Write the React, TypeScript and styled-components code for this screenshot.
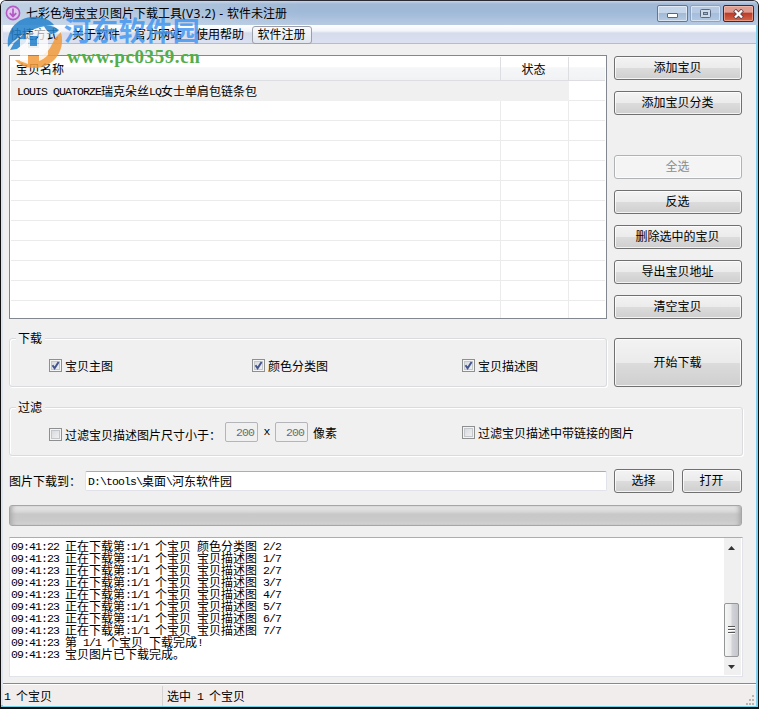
import React from "react";
import styled, { createGlobalStyle, css } from "styled-components";

const Global = createGlobalStyle`
  *, *::before, *::after { box-sizing: border-box; }
  html, body { margin: 0; padding: 0; overflow: hidden; }
  body { font-family: "Noto Sans CJK SC", sans-serif; font-size: 12px; line-height: 12px; color: #000; }
`;

const Window = styled.div`
  position: relative;
  width: 759px;
  height: 709px;
  display: flex;
  flex-direction: column;
  border: 1px solid #111;
  border-top-color: #2b2b36;
  border-bottom-width: 2px;
  border-radius: 6px 6px 0 0;
  box-shadow: inset -2px 0 #7fd0ee, inset 0 -2px #72d3e8, inset 2px 0 #dfe3ec;
  background: #f0f0f0;
  overflow: hidden;
`;

const TitleBar = styled.header`
  height: 24px;
  flex: none;
  display: flex;
  align-items: center;
  padding: 0 4px 0 4px;
  background: linear-gradient(to right, rgba(220, 230, 240, 0.55), transparent 40%),
    linear-gradient(#c6d6e8 0, #a2b9d5 3px, #9fb9d8 11px, #b7cae2 100%);
`;
const TitleText = styled.h1`
  margin: 0 auto 0 5px;
  font-size: 12px;
  font-weight: 400;
  line-height: 16px;
  white-space: pre;
  span { font-family: "Noto Sans", sans-serif; letter-spacing: 0.4px; }
`;
const Controls = styled.div`
  display: flex;
  gap: 2px;
  margin-top: 1px;
`;
const Control = styled.button<{ $kind?: "dim" | "close" }>`
  width: 31px;
  height: 17px;
  padding: 0;
  display: grid;
  place-items: center;
  border: 1px solid #5f7895;
  border-radius: 2px;
  box-shadow: inset 0 0 0 1px rgba(255, 255, 255, 0.5);
  background: linear-gradient(#c5d6ea 45%, #a3bad4 50%, #b5cbe3);
  ${(p) => p.$kind === "dim" && css`border-color: #8ca4c3; background: linear-gradient(#b6cae3 45%, #a6bddb 50%, #b1c8e3);`}
  ${(p) => p.$kind === "close" && css`border-color: #4f2027; box-shadow: inset 0 0 0 1px rgba(255, 205, 190, 0.5); background: linear-gradient(#df9c91 40%, #bd3c29 50%, #d3674b);`}
`;

const MenuBar = styled.nav`
  height: 19px;
  flex: none;
  display: flex;
  align-items: center;
  margin: 0 2px;
  padding-left: 7px;
  border-bottom: 1px solid #b9bcc3;
  background: linear-gradient(#fff 0, #f2f4fa 6px, #d5dcec 8px, #dbe1f0 100%);
`;
const MenuItem = styled.span`
  width: 62px;
  line-height: 16px;
`;
const MenuButton = styled.button`
  width: 60px;
  height: 18px;
  margin: 1px 0 0 -6px;
  padding: 0 1px 1px 0;
  font: inherit;
  border: 1px solid #9a9fa9;
  border-radius: 3px;
  background: linear-gradient(#fafafc, #e0e5ee);
`;

const Content = styled.main`
  flex: 1;
  padding: 11px 15px 0 8px;
  display: flex;
  flex-direction: column;
`;
const Columns = styled.div`
  display: grid;
  grid-template-columns: 598px 128px;
  column-gap: 7px;
`;
const TopArea = styled(Columns)` height: 264px; `;

const List = styled.section`
  height: 264px;
  padding: 1px;
  border: 1px solid #828790;
  background: #fff;
`;
const ListRow = styled.div<{ $kind?: "head" | "selected" }>`
  display: grid;
  grid-template-columns: 490px 68px 1fr;
  grid-template-rows: 100%;
  height: 20px;
  & > div { border-right: 1px solid #ebebeb; border-bottom: 1px solid #ebebeb; padding-left: 7px; line-height: 17px; white-space: nowrap; }
  & > div:last-child { border-right: 0; }
  ${(p) => p.$kind === "head" && css`
    height: 24px;
    background: linear-gradient(#fff 40%, #f5f6f7 45%, #f1f2f4);
    & > div { line-height: 23px; padding-left: 5px; border-color: #dcdee1; }
    & > div:nth-child(2) { padding: 0 2px 0 0; text-align: center; }
  `}
  ${(p) => p.$kind === "selected" && css`
    & > div { line-height: 19px; padding-left: 6px; border-color: #f0f0f0; background: #f0f0f0; }
    & > div:last-child { background: #fff; border-color: #ebebeb; }
  `}
  ${(p) => !p.$kind && css`
    &:last-child { height: 17px; }
    &:last-child > div { border-bottom: 0; }
  `}
`;

const Actions = styled.div`
  display: flex;
  flex-direction: column;
  gap: 11px;
  padding-top: 1px;
`;
const Button = styled.button<{ $tall?: boolean; $apart?: boolean }>`
  width: 100%;
  height: ${(p) => (p.$tall ? 49 : 24)}px;
  margin: ${(p) => (p.$apart ? "29px 0 0" : "0")};
  padding: 0 1px 2px 0;
  font: inherit;
  line-height: 18px;
  color: #000;
  border: 1px solid #707070;
  border-radius: 3px;
  box-shadow: inset 0 0 0 1px rgba(255, 255, 255, 0.75);
  background: linear-gradient(#f3f3f3, #ebebeb 50%, #dcdcdc 50%, #cfcfcf);
  &:disabled { color: #8b8b8b; border-color: #b0b3b6; background: #f4f4f4; }
`;

const DownloadArea = styled(Columns)` margin-top: 19px; `;
const Group = styled.fieldset`
  position: relative;
  width: 100%;
  height: 49px;
  margin: 0;
  padding: 0 0 0 39px;
  display: grid;
  grid-template-columns: 203px 210px 1fr;
  align-items: center;
  border: 1px solid #d9dbde;
  border-radius: 3px;
  box-shadow: inset 1px 1px #fff, 1px 1px #fff;
`;
const FilterGroup = styled(Group)`
  width: 734px;
  margin-top: 20px;
  grid-template-columns: 413px 1fr;
`;
const GroupTitle = styled.span`
  position: absolute;
  left: 6px;
  top: -9px;
  padding: 0 3px 0 2px;
  line-height: 16px;
  background: #f0f0f0;
`;
const Option = styled.label<{ $up?: boolean }>`
  display: flex;
  align-items: center;
  gap: 3px;
  height: 18px;
  line-height: 18px;
  margin-top: ${(p) => (p.$up ? 2 : 6)}px;
  white-space: nowrap;
`;
const Box = styled.i`
  width: 13px;
  height: 13px;
  flex: none;
  display: grid;
  border: 1px solid #8e8f8f;
  box-shadow: inset 0 0 0 1px #f4f4f4, inset 0 0 0 2px #c3c6ca;
  background: linear-gradient(135deg, #d2d5da, #f6f6f6);
`;
const Colon = styled.span` display: inline-block; width: 12px; `;
const FilterSize = styled.div`
  display: flex;
  align-items: center;
  ${Option} { width: 176px; }
`;
const SizeField = styled.span`
  width: 33px;
  height: 20px;
  margin-top: 1px;
  padding-right: 3px;
  text-align: right;
  line-height: 18px;
  color: #6d6d6d;
  border: 1px solid #b3b5b8;
  border-radius: 2px;
`;
const Times = styled.span` width: 17px; text-align: center; `;
const Unit = styled.span` padding: 2px 0 0 5px; line-height: 16px; `;

const PathRow = styled.div`
  display: grid;
  grid-template-columns: 76px 522px 67px 68px;
  align-items: center;
  height: 24px;
  margin-top: 13px;
  & > button { width: 60px; justify-self: end; }
  & > span { line-height: 18px; white-space: nowrap; }
`;
const PathField = styled.div`
  height: 20px;
  padding-left: 2px;
  line-height: 17px;
  border: 1px solid #e2e3ea;
  border-top-color: #abadb3;
  border-radius: 2px;
  background: #fff;
`;
const Progress = styled.div`
  width: 733px;
  height: 21px;
  flex: none;
  margin-top: 12px;
  border: 1px solid #a6a6a6;
  border-radius: 3px;
  box-shadow: inset 4px 0 4px -2px #aaa, inset -4px 0 4px -2px #aaa;
  background: linear-gradient(#ececec, #d6d6d6 6px, #c8c8c8 8px, #cacaca 15px, #d9d9d9);
`;
const Log = styled.section`
  width: 734px;
  height: 140px;
  flex: none;
  display: flex;
  margin-top: 11px;
  padding: 0 1px 1px 0;
  border: 1px solid #e2e3ea;
  border-top-color: #abadb3;
  background: #fff;
`;
const LogLines = styled.div`
  flex: 1;
  padding: 2px 0 0 1px;
  & > div { height: 12px; line-height: 12px; white-space: pre; }
`;
const ScrollBar = styled.div`
  width: 17px;
  display: flex;
  flex-direction: column;
  align-items: center;
  padding: 8px 2px 6px 0;
  background: #f0f0f0;
`;
const Thumb = styled.div`
  width: 15px;
  height: 54px;
  margin: auto 0 8px;
  display: grid;
  place-items: center;
  border: 1px solid #949698;
  border-radius: 2px;
  background: linear-gradient(to right, #f6f6f6, #e9eaeb 45%, #d2d3d8 55%, #c5c6cb);
`;
const StatusBar = styled.footer`
  height: 23px;
  flex: none;
  display: flex;
  margin: 0 2px 1px;
  padding-left: 1px;
  line-height: 23px;
  border-top: 1px solid #898989;
  box-shadow: inset 0 1px #fff;
  background: #f1edec;
  & > div:first-child { width: 159px; margin-top: 2px; line-height: 19px; border-right: 1px solid #d5d2d2; }
  & > div:nth-child(2) { flex: 1; padding-left: 4px; }
  & > svg { align-self: flex-end; }
`;

const Watermark = styled.div`
  position: absolute;
  left: 5px;
  top: 13px;
  width: 200px;
  height: 56px;
  pointer-events: none;
  & > svg { position: absolute; left: 0; top: 0; }
`;
const SiteName = styled.div`
  position: absolute;
  left: 58px;
  top: 0;
  font-size: 27px;
  line-height: 32px;
  font-weight: 700;
  letter-spacing: 0.2px;
  white-space: nowrap;
  color: #3f95f0;
  opacity: 0.82;
`;
const SiteUrl = styled.div`
  position: absolute;
  left: 61px;
  top: 31px;
  font: 700 19px/24px "Liberation Serif", serif;
  letter-spacing: 0.6px;
  white-space: nowrap;
  color: #54ad4d;
`;

const Narrow = styled.span`
  font-family: "Liberation Mono", monospace;
  font-size: 11.5px;
  letter-spacing: -0.9px;
  line-height: 1;
  vertical-align: 1px;
  white-space: pre;
`;

/** Sets half-width characters on a six-pixel grid beside twelve-pixel ideographs. */
function Mixed({ text }: { text: string }) {
  return <>{text.split(/([\x20-\x7e]+)/).map((part, i) => (i % 2 ? <Narrow key={i}>{part}</Narrow> : part))}</>;
}

function Check({ label, checked, up, colon }: { label: string; checked?: boolean; up?: boolean; colon?: boolean }) {
  return (
    <Option $up={up}>
      <Box>
        {checked && (
          <svg width="11" height="11" viewBox="0 0 11 11" fill="none">
            <path d="M2.5 5.2 4.6 8.3 8.6 2" stroke="#43558f" strokeWidth="2" />
          </svg>
        )}
      </Box>
      <span>{label}{colon && <Colon>：</Colon>}</span>
    </Option>
  );
}

const logLines = [
  "09:41:22 正在下载第:1/1 个宝贝 颜色分类图 2/2",
  ...[1, 2, 3, 4, 5, 6, 7].map((n) => `09:41:23 正在下载第:1/1 个宝贝 宝贝描述图 ${n}/7`),
  "09:41:23 第 1/1 个宝贝 下载完成!",
  "09:41:23 宝贝图片已下载完成。",
];

export default function App() {
  return (
    <Window>
      <Global />
      <TitleBar>
        <svg width="16" height="16" viewBox="0 0 16 16" fill="none" stroke="#b45bc4">
          <circle cx="8" cy="8" r="6.6" strokeWidth="1.6" fill="#dfc9ee" />
          <path d="M8 3.5v8M4.8 8.2 8 11.4l3.2-3.2" strokeWidth="1.8" />
        </svg>
        <TitleText>七彩色淘宝宝贝图片下载工具<span>(V3.2) - </span>软件未注册</TitleText>
        <Controls>
          <Control aria-label="最小化">
            <svg width="13" height="11" viewBox="0 0 13 11"><rect x="1.5" y="5.5" width="10" height="4" rx=".5" fill="#fff" stroke="#58677a" /></svg>
          </Control>
          <Control $kind="dim" aria-label="最大化">
            <svg width="11" height="9" viewBox="0 0 11 9" fill="none" stroke="#596b82"><rect x=".5" y=".5" width="10" height="8" rx="1" fill="#cfdae8" /><rect x="3.5" y="3.5" width="4" height="2" fill="#9db4d2" /></svg>
          </Control>
          <Control $kind="close" aria-label="关闭">
            <svg width="13" height="10" viewBox="0 0 13 10" fill="none"><path d="m2.5 1 8 8m0-8-8 8" stroke="#65454b" strokeWidth="4" /><path d="m3 1.5 7 7m0-7-7 7" stroke="#fff" strokeWidth="2.3" /></svg>
          </Control>
        </Controls>
      </TitleBar>
      <MenuBar>
        {["快捷方式", "关于软件", "官方网站", "使用帮助"].map((t) => <MenuItem key={t}>{t}</MenuItem>)}
        <MenuButton>软件注册</MenuButton>
      </MenuBar>
      <Content>
        <TopArea>
          <List>
            <ListRow $kind="head"><div>宝贝名称</div><div>状态</div><div /></ListRow>
            <ListRow $kind="selected"><div><Mixed text="LOUIS QUATORZE瑞克朵丝LQ女士单肩包链条包" /></div><div /><div /></ListRow>
            {Array.from({ length: 11 }, (_, i) => <ListRow key={i}><div /><div /><div /></ListRow>)}
          </List>
          <Actions>
            <Button>添加宝贝</Button>
            <Button>添加宝贝分类</Button>
            <Button $apart disabled>全选</Button>
            <Button>反选</Button>
            <Button>删除选中的宝贝</Button>
            <Button>导出宝贝地址</Button>
            <Button>清空宝贝</Button>
          </Actions>
        </TopArea>
        <DownloadArea>
          <Group as="section">
            <GroupTitle>下载</GroupTitle>
            <Check label="宝贝主图" checked />
            <Check label="颜色分类图" checked />
            <Check label="宝贝描述图" checked />
          </Group>
          <Button $tall>开始下载</Button>
        </DownloadArea>
        <FilterGroup as="section">
          <GroupTitle>过滤</GroupTitle>
          <FilterSize>
            <Check label="过滤宝贝描述图片尺寸小于" colon />
            <SizeField><Mixed text="200" /></SizeField>
            <Times><Mixed text="x" /></Times>
            <SizeField><Mixed text="200" /></SizeField>
            <Unit>像素</Unit>
          </FilterSize>
          <Check label="过滤宝贝描述中带链接的图片" up />
        </FilterGroup>
        <PathRow>
          <span>图片下载到<Colon>：</Colon></span>
          <PathField><Mixed text="D:\tools\桌面\河东软件园" /></PathField>
          <Button>选择</Button>
          <Button>打开</Button>
        </PathRow>
        <Progress />
        <Log>
          <LogLines>{logLines.map((line) => <div key={line}><Mixed text={line} /></div>)}</LogLines>
          <ScrollBar>
            <svg width="7" height="4" viewBox="0 0 7 4"><path d="M0 4 3.5 0 7 4Z" fill="#333" /></svg>
            <Thumb>
              <svg width="7" height="9" viewBox="0 0 7 9" stroke="#555"><path d="M0 .5h7M0 3.5h7M0 6.5h7" /><path d="M0 1.5h7M0 4.5h7M0 7.5h7" stroke="#fff" /></svg>
            </Thumb>
            <svg width="7" height="4" viewBox="0 0 7 4"><path d="M0 0 3.5 4 7 0Z" fill="#333" /></svg>
          </ScrollBar>
        </Log>
      </Content>
      <StatusBar>
        <div><Mixed text="1 个宝贝" /></div>
        <div><Mixed text="选中 1 个宝贝" /></div>
        <svg width="11" height="12" viewBox="0 0 11 12" fill="#b8b5b5">
          {[[7, 1], [7, 5], [4, 5], [7, 9], [4, 9], [1, 9]].map(([x, y]) => <rect key={`${x}-${y}`} x={x} y={y} width="2" height="2" />)}
        </svg>
      </StatusBar>
      <Watermark>
        <svg width="58" height="56" viewBox="0 0 58 56" opacity=".85">
          <path d="M2 33C0 17 10 4 26 3c10-1 18 3 22 8C30 12 13 20 2 33Z" fill="#2482cc" />
          <path d="M3 36C14 22 29 14 48 12c4 1 7 4 8 8-13-2-24 1-32 7-7 6-12 10-21 9Z" fill="#fff" opacity=".7" />
          <path d="M8 29 20 18v10l-9 7-7 1Z" fill="#2482cc" />
          <path d="M55 18c5 19-8 36-27 36-8 0-15-3-19-8 19 2 30-4 35-12 3-5 5-11 11-16Z" fill="#f19b3b" />
          <path d="M14 25h8v9h11V20h9v21c-3 3-6 5-9 6v-6H22v9l-8-3Z" fill="#fff" opacity=".85" />
          <path d="M22 42h11v10H22Z" fill="#f19b3b" />
          <path d="M24 22h7v10h-7Z" fill="#2482cc" />
          <path d="M38 12c6-1 11 0 15 4-4 5-11 5-15-4Z" fill="#2482cc" />
        </svg>
        <SiteName>河东软件园</SiteName>
        <SiteUrl>www.pc0359.cn</SiteUrl>
      </Watermark>
    </Window>
  );
}
